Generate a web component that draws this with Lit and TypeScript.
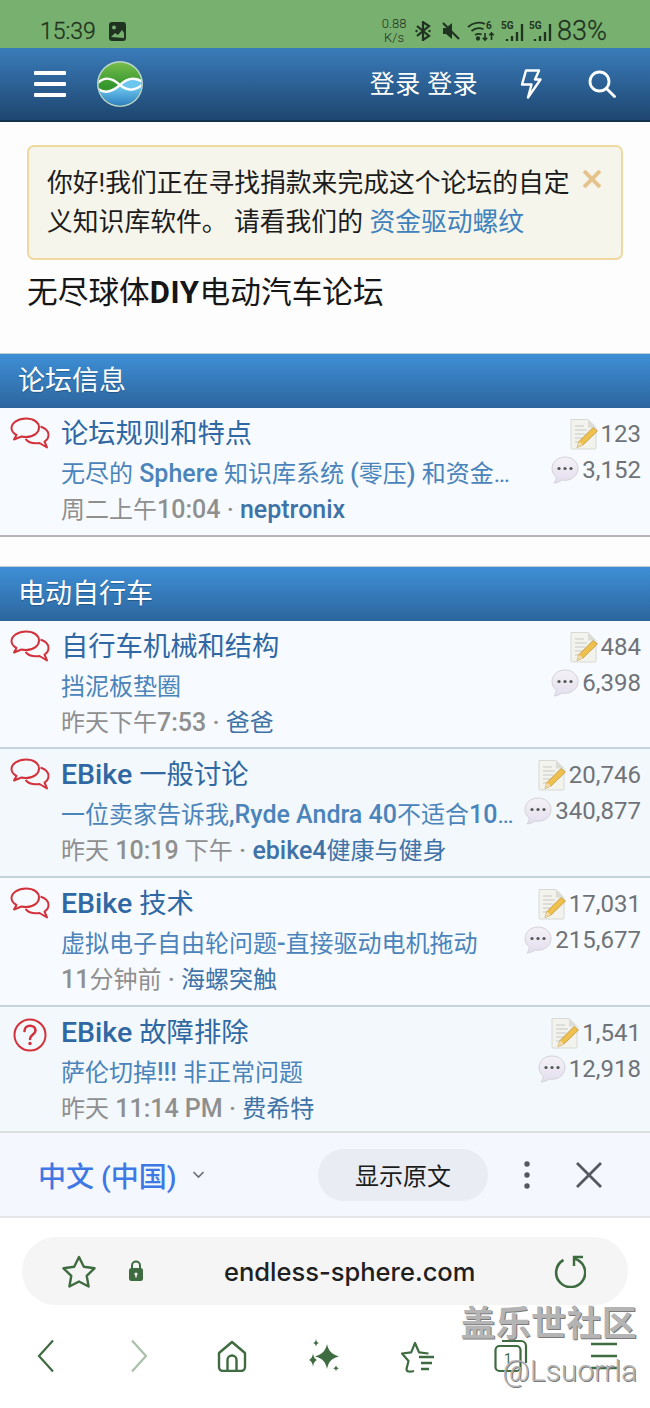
import { LitElement, html, css, svg } from "lit";
import { customElement } from "lit/decorators.js";

const mix = (t: string) =>
  t.split(/([\u0000-\u024f]+)/).filter(Boolean).map((p) =>
    /^[\u0000-\u024f]+$/.test(p) && /[^\s]/.test(p) ? html`<span class="l">${p}</span>` : p
  );

const chat = html`<svg class="ic" width="40" height="32" viewBox="0 0 40 32" fill="none" stroke="#d2323c" stroke-width="2" stroke-linejoin="round">
  <path d="M16 1.500C8 1.500 1.500 5.800 1.500 11c0 3 2 5.400 5 7l-2.500 4.500 7.500-3c1.500.3 3 .5 4.500.5 8 0 13-4.500 13-9.500S24 1.500 16 1.500Z"/>
  <path d="M30.500 9.500c4.500 1.500 8 4.500 8 8.500 0 2.500-1.500 5-4 6.500l2.500 6-7.500-4.500c-1 .2-2.500.3-3.500.3-4.500 0-8.500-1.800-10.500-4.500"/>
</svg>`;
const question = html`<svg class="ic q" width="34" height="34" viewBox="0 0 34 34" fill="none" stroke="#d2323c" stroke-width="2">
  <circle cx="17" cy="17" r="15.500"/>
  <path d="M11.500 13c0-3.300 2.500-5.200 5.500-5.200s5.500 1.900 5.500 4.700c0 4-5.500 4-5.500 8.500" stroke-width="2.600" stroke-linecap="round"/>
  <circle cx="17" cy="25.500" r="1.700" fill="#d2323c" stroke="none"/>
</svg>`;
const note = html`<svg width="28" height="32" viewBox="0 0 28 32">
  <path d="M1 1.500h17l8 8V30a1 1 0 0 1-1 1H2a1 1 0 0 1-1-1Z" fill="#f3f3ee" stroke="#d8d8d4"/>
  <path d="M18 1.500v8h8Z" fill="#dcdcd6"/>
  <path d="M5 8h9M5 12h12M5 16h10M5 20h8M5 24h6" stroke="#c8c8c4" stroke-width="1"/>
  <path d="M23 9.500l4.500 3.500L13 27l-6 2.500 2-6Z" fill="#eec04e" stroke="#b98a2c" stroke-width=".7"/>
  <path d="M7 29.500l2-6 4 3.500Z" fill="#f1dcae"/>
</svg>`;
const bubble = html`<svg width="28" height="29" viewBox="0 0 28 29">
  <defs><linearGradient id="bb" x1="0" y1="0" x2="0" y2="1"><stop offset="0" stop-color="#f4f2f6"/><stop offset="1" stop-color="#e4deee"/></linearGradient></defs>
  <path d="M14 1C6.800 1 1 6 1 12.500c0 3.500 1.600 6.500 4.300 8.600-.2 2.200-1 4.300-2.300 5.900 3.300-.3 6-1.400 8-3 1 .2 2 .3 3 .3 7.200 0 13-5.200 13-11.800S21.200 1 14 1Z" fill="url(#bb)" stroke="#d4d2da"/>
  <circle cx="8" cy="12.500" r="1.600" fill="#555"/><circle cx="14" cy="12.500" r="1.600" fill="#555"/><circle cx="20" cy="12.500" r="1.600" fill="#555"/>
</svg>`;

type Row = { icon: any; title: string; sub: string; meta: string; who: string; a: string; b: string; h: number };
const s1: Row[] = [
  { icon: chat, title: "论坛规则和特点", sub: "无尽的 Sphere 知识库系统 (零压) 和资金驱动螺纹", meta: "周二上午10:04 · ", who: "neptronix", a: "123", b: "3,152", h: 129 },
];
const s2: Row[] = [
  { icon: chat, title: "自行车机械和结构", sub: "挡泥板垫圈", meta: "昨天下午7:53 · ", who: "爸爸", a: "484", b: "6,398", h: 128 },
  { icon: chat, title: "EBike 一般讨论", sub: "一位卖家告诉我,Ryde Andra 40不适合1000W电机", meta: "昨天 10:19 下午 · ", who: "ebike4健康与健身", a: "20,746", b: "340,877", h: 129 },
  { icon: chat, title: "EBike 技术", sub: "虚拟电子自由轮问题-直接驱动电机拖动", meta: "11分钟前 · ", who: "海螺突触", a: "17,031", b: "215,677", h: 129 },
  { icon: question, title: "EBike 故障排除", sub: "萨伦切掉!!! 非正常问题", meta: "昨天 11:14 PM · ", who: "费希特", a: "1,541", b: "12,918", h: 126 },
];

@customElement("app-root")
export class AppRoot extends LitElement {
  static styles = css`
    :host { display: block; width: 650px; height: 1408px; overflow: hidden; position: relative; background: #fff;
      font-family: Roboto, "Noto Sans CJK SC", sans-serif; }
    * { box-sizing: border-box; }
    .status { height: 48px; background: #77b06f; display: flex; align-items: center; padding: 14px 0 0 40px; color: #1f3320; }
    .time { font-size: 23px; font-weight: 300; -webkit-text-stroke: .3px #1f3320; }
    .status .pic { margin-left: 12px; }
    .sright { margin-left: auto; display: flex; align-items: center; padding-right: 43px; }
    .speed { font-size: 13px; line-height: 14px; text-align: center; width: 26px; margin-right: 8px; font-weight: 300; }
    .gb { margin-left: 10px; }
    .gw { margin-left: 6px; }
    .g5 { margin-left: 4px; }
    .batt { font-size: 27px; margin-left: 4px; font-weight: 300; -webkit-text-stroke: .3px #1f3320; }
    .nav { height: 74px; background: linear-gradient(#3a7cba, #1e4670); border-bottom: 2px solid #15324f; display: flex; align-items: center; color: #fff; padding: 0 0 0 34px; }
    .burger { width: 32px; height: 26px; display: flex; flex-direction: column; justify-content: space-between; }
    .burger i { height: 4px; background: #fff; display: block; border-radius: 1px; }
    .logo { margin-left: 31px; }
    .login { margin-left: auto; font-size: 25px; letter-spacing: .4px; margin-bottom: 4px; }
    .bolt { margin-left: 42px; }
    .search { margin: 0 34px 0 46px; }
    .content { background: #fdfdfe; height: 231px; padding: 23px 27px 0; }
    .alert { height: 115px; border: 2px solid #f0d9a0; border-radius: 7px; background: #f6f5ec; padding: 17px 50px 0 18px; position: relative; font-size: 25.800px; line-height: 39px; color: #1c1c1c; }
    .alert a { color: #3f82bd; text-decoration: none; }
    .alert .x { position: absolute; right: 20px; top: 23px; }
    .h1 { font-size: 30.700px; line-height: 40px; margin-top: 13px; color: #161616; }
    .h1 b { font-weight: 700; font-family: Roboto, sans-serif; font-size: 31px; letter-spacing: .6px; }
    .sect { height: 55px; background: linear-gradient(#3e8fd6, #2c659e); border-top: 1px solid #c3ccd4; color: #fff; font-size: 27px; line-height: 54px; padding-left: 18px; text-shadow: 0 1px 1px rgba(0,0,0,.25); }
    .row { display: flex; background: #f7fbff; border-bottom: 2px solid #c2d3dc; padding: 0 9px 0 10px; }
    .row.alt { background: #f3f8fc; }
    .row.last-a { border-bottom-color: #b5b5b5; }
    .row.last-b { border-bottom-color: #dcdee2; }
    .iconc { width: 51px; flex: none; padding-top: 9px; }
    .ic.q { margin-left: 3px; margin-top: 2px; }
    .main { width: 459px; flex: none; min-width: 0; }
    .title { font-size: 27.300px; line-height: 36px; margin-top: 8px; color: #2f68a3; white-space: nowrap; }
    .title .l { font-weight: 500; font-size: 28.500px; }
    .sub { font-size: 24px; line-height: 36px; margin-top: 4px; color: #4b84ba; white-space: nowrap; overflow: hidden; text-overflow: ellipsis; }
    .sub .l { font-weight: 500; font-size: 25px; }
    .meta { font-size: 24px; line-height: 36px; color: #8f8f8f; white-space: nowrap; }
    .meta .l { font-weight: 500; font-size: 25px; }
    .meta a { color: #3f73a8; }
    .stats { flex: 1; min-width: 0; margin-left: -80px; display: flex; flex-direction: column; align-items: flex-end; padding-top: 10px; font-size: 24px; color: #6f7378; }
    .stat { display: flex; align-items: center; height: 32px; gap: 3px; white-space: nowrap; margin-bottom: 4px; }
    .gap { height: 29px; background: #fdfdfe; }
    .tr { height: 85px; background: #f4f7fe; border-bottom: 2px solid #e4e5e8; display: flex; align-items: center; padding-left: 38px; }
    .lang { font-size: 28px; font-weight: 500; color: #3f78e4; }
    .chev { margin-left: 16px; }
    .pill { margin-left: auto; width: 170px; height: 52px; border-radius: 26px; background: #e9ecf3; display: flex; align-items: center; justify-content: center; font-size: 24px; color: #1c1c1c; }
    .dots { margin-left: 36px; }
    .close { margin: 0 47px 0 45px; }
    .bottom { height: 190px; background: #fff; padding-top: 19px; }
    .url { height: 68px; margin: 0 22px; border-radius: 34px; background: #f5f5f5; display: flex; align-items: center; padding: 0 42px 0 40px; }
    .lock { margin-left: 32px; }
    .addr { font-family: Inter, Roboto, sans-serif; font-size: 25.500px; font-weight: 500; color: #202020; margin-left: 80px; }
    .reload { margin-left: auto; }
    .tools { display: grid; grid-template-columns: repeat(7, 1fr); justify-items: center; align-items: center; margin-top: 33px; height: 36px; }
    .wm { position: absolute; right: 13px; top: 1304px; text-align: right; color: #b4b4b4; text-shadow: 1px 1px 0 #7a7a7a; pointer-events: none; }
    .wm .a { font-size: 35px; line-height: 42px; font-weight: 700; letter-spacing: .3px; }
    .wm .b { font-size: 30px; line-height: 40px; font-weight: 300; margin-top: 5px; }
  `;

  row(r: Row, cls: string) {
    return html`<div class="row ${cls}" style="height:${r.h}px">
      <div class="iconc">${r.icon}</div>
      <div class="main">
        <div class="title">${mix(r.title)}</div>
        <div class="sub">${mix(r.sub)}</div>
        <div class="meta">${mix(r.meta)}<a>${mix(r.who)}</a></div>
      </div>
      <div class="stats">
        <div class="stat">${note}<span>${r.a}</span></div>
        <div class="stat">${bubble}<span>${r.b}</span></div>
      </div>
    </div>`;
  }

  render() {
    const g = "#3f6b40";
    const k = "#1f3320";
    return html`
      <div class="status">
        <span class="time">15:39</span>
        <svg class="pic" width="19" height="21" viewBox="0 0 19 21"><rect x="1" y="1" width="17" height="19" rx="3" fill="${k}"/><circle cx="6" cy="6.500" r="2" fill="#77b06f"/><path d="M3 16l4-4 3 2 4-5 2 3v5Z" fill="#77b06f"/></svg>
        <div class="sright">
          <div class="speed">0.88<br />K/s</div>
          <svg width="16" height="20" viewBox="0 0 16 20" fill="none" stroke="${k}" stroke-width="2.200"><path d="M2 5l12 10-6 4V1l6 4L2 15"/><circle cx="1.500" cy="10" r="1.200" fill="${k}" stroke="none"/><circle cx="14.500" cy="10" r="1.200" fill="${k}" stroke="none"/></svg>
          <svg class="gb" width="20" height="20" viewBox="0 0 20 20"><path d="M2 7h3l6-5v16l-6-5H2Z" fill="${k}"/><path d="M2 2l16 16" stroke="${k}" stroke-width="2.200"/></svg>
          <svg class="gw" width="28" height="22" viewBox="0 0 28 22" fill="none" stroke="${k}" stroke-width="1.700"><path d="M1 7c5-4.500 12-5.500 17-3M4.500 11c3.500-3 8-3.500 12-1.800M8 15c2-1.300 4.500-1.500 6.500-.6"/><circle cx="11" cy="18.500" r="1.300" fill="${k}"/><path d="M18 13v7M15.800 17.800l2.200 2.200 2.200-2.200M24.500 20v-7M22.300 15.200l2.200-2.200 2.200 2.200" stroke-width="1.600"/><text x="19" y="9" font-size="10" font-weight="700" fill="${k}" stroke="none" font-family="Roboto">6</text></svg>
          ${[0, 1].map((i) => svg`<svg class=${i ? "g5" : "gw"} width="24" height="22" viewBox="0 0 24 22"><text x="0" y="9" font-size="10" font-weight="700" fill="${k}" font-family="Roboto">5G</text><path d="M6 21v-2M11 21v-5M16 21v-9M21 21V4" stroke="${k}" stroke-width="2.300"/></svg>`)}
          <span class="batt">83%</span>
        </div>
      </div>
      <div class="nav">
        <div class="burger"><i></i><i></i><i></i></div>
        <svg class="logo" width="46" height="46" viewBox="0 0 46 46">
          <defs>
            <linearGradient id="lg" x1="0" y1="0" x2="0" y2="1"><stop offset="0" stop-color="#7cbf4e"/><stop offset=".55" stop-color="#33952c"/></linearGradient>
            <linearGradient id="lb" x1="0" y1="0" x2="0" y2="1"><stop offset=".3" stop-color="#6cc6ee"/><stop offset="1" stop-color="#2a79bc"/></linearGradient>
            <clipPath id="ov"><circle cx="23" cy="23" r="21.500"/></clipPath>
          </defs>
          <circle cx="23" cy="23" r="23" fill="#bcd6cf"/>
          <g clip-path="url(#ov)">
            <rect width="46" height="46" fill="url(#lg)"/>
            <path d="M0 28C8 33 15 31 23 24C30 17 38 16 46 21V46H0Z" fill="url(#lb)"/>
            <path d="M1 22C8 15 15 17 23 24C30 30 38 30 45 24M1 28C8 33 15 31 23 24C30 17 38 16 46 21" fill="none" stroke="#fff" stroke-width="2.400"/>
          </g>
        </svg>
        <span class="login">登录 登录</span>
        <svg class="bolt" width="22" height="30" viewBox="0 0 22 30" fill="none" stroke="#fff" stroke-width="2.400" stroke-linejoin="round"><path d="M6 1.500h13l-4 9h5.500L8 28.500l3.500-13H2Z"/></svg>
        <svg class="search" width="28" height="28" viewBox="0 0 28 28" fill="none" stroke="#fff" stroke-width="2.800" stroke-linecap="round"><circle cx="11.500" cy="11.500" r="9.500"/><path d="M18.500 18.500l8 8"/></svg>
      </div>
      <div class="content">
        <div class="alert">你好!我们正在寻找捐款来完成这个论坛的自定义知识库软件。 请看我们的 <a>资金驱动螺纹</a>
          <svg class="x" width="18" height="18" viewBox="0 0 18 18" stroke="#e5c38d" stroke-width="4"><path d="M1 1l16 16M17 1L1 17"/></svg>
        </div>
        <div class="h1">无尽球体<b>DIY</b>电动汽车论坛</div>
      </div>
      <div class="sect">论坛信息</div>
      ${s1.map((r) => this.row(r, "last-a"))}
      <div class="gap"></div>
      <div class="sect">电动自行车</div>
      ${s2.map((r, i) => this.row(r, (i % 2 ? "alt " : "") + (i === 3 ? "last-b" : "")))}
      <div class="tr">
        <span class="lang">中文 (中国)</span>
        <svg class="chev" width="13" height="8" viewBox="0 0 13 8" fill="none" stroke="#6a6d74" stroke-width="1.600"><path d="M1.500 1l5 5 5-5"/></svg>
        <div class="pill">显示原文</div>
        <svg class="dots" width="6" height="28" viewBox="0 0 6 28" fill="#55585f"><circle cx="3" cy="3" r="2.700"/><circle cx="3" cy="14" r="2.700"/><circle cx="3" cy="25" r="2.700"/></svg>
        <svg class="close" width="28" height="28" viewBox="0 0 28 28" stroke="#55585f" stroke-width="2.800"><path d="M2 2l24 24M26 2L2 26"/></svg>
      </div>
      <div class="bottom">
        <div class="url">
          <svg width="34" height="33" viewBox="0 0 34 33" fill="none" stroke="${g}" stroke-width="2.400" stroke-linejoin="round"><path d="M17 2l4.800 9.700 10.700 1.600-7.800 7.500 1.900 10.700-9.600-5-9.600 5 1.900-10.700-7.800-7.500 10.700-1.600Z"/></svg>
          <svg class="lock" width="16" height="24" viewBox="0 0 16 24"><path d="M4 10V6.500a4 4 0 0 1 8 0V10" fill="none" stroke="${g}" stroke-width="2"/><rect x="1" y="9" width="14" height="13" rx="2.500" fill="${g}"/><circle cx="8" cy="15" r="1.600" fill="#f5f5f5"/><path d="M8 15v3.500" stroke="#f5f5f5" stroke-width="1.400"/></svg>
          <span class="addr">endless-sphere.com</span>
          <svg class="reload" width="32" height="34" viewBox="0 0 32 34" fill="none" stroke="${g}" stroke-width="2.600"><path d="M9.500 6A14.500 14.500 0 1 0 20 4.500"/><path d="M29 3H20V12" stroke-width="2.400"/></svg>
        </div>
        <div class="tools">
          <svg width="18" height="34" viewBox="0 0 18 34" fill="none" stroke="${g}" stroke-width="2.200"><path d="M16 1.500L2 17l14 15.500"/></svg>
          <svg width="18" height="34" viewBox="0 0 18 34" fill="none" stroke="#a9c0a9" stroke-width="2.200"><path d="M2 1.500L16 17 2 32.500"/></svg>
          <svg width="30" height="32" viewBox="0 0 30 32" fill="none" stroke="${g}" stroke-width="2.400" stroke-linejoin="round"><path d="M2 13L15 2l13 11v14a4 4 0 0 1-4 4H6a4 4 0 0 1-4-4Z"/><path d="M10.500 31V20a4.500 4.500 0 0 1 9 0v11"/></svg>
          <svg width="32" height="34" viewBox="0 0 32 34" fill="${g}"><path d="M18 5c1.500 7 4.500 10 12 12.500-7.500 2-10.500 5-12 12.500-1.500-7.500-4.500-10.500-12-12.500 7.500-2.500 10.500-5.500 12-12.500Z"/><path d="M7 0c.4 2.500 1 3.200 3 4-2 .6-2.600 1.300-3 4-.4-2.700-1-3.400-3-4 2-.8 2.600-1.500 3-4ZM27 26c.3 2 1 2.700 3 3.200-2 .5-2.700 1.200-3 3.500-.3-2.300-1-3-3-3.500 2-.5 2.700-1.200 3-3.200ZM4 14c.5 4 1.500 5.500 4 7-2.500 1-3.500 3-4 7-.5-4-1.500-6-4-7 2.500-1.500 3.500-3 4-7Z"/></svg>
          <svg width="34" height="33" viewBox="0 0 34 33" fill="none" stroke="${g}" stroke-width="2.200" stroke-linejoin="round"><path d="M13 31c-4 1-7.500 1-7.500-2l2-8L1 13.500l9.200-1.200L14 3l4 9.300 9.500 1.200"/><path d="M18 17h15M20 23h11M20 29h8" stroke-width="2.400"/></svg>
          <svg width="34" height="34" viewBox="0 0 34 34" fill="none" stroke="${g}" stroke-width="2.200"><rect x="1.500" y="7" width="25" height="25" rx="4"/><path d="M8 2h19a5 5 0 0 1 5 5v17"/><text x="10" y="25" font-size="14" fill="${g}" stroke="none" font-family="Roboto">1</text></svg>
          <svg width="28" height="30" viewBox="0 0 28 30" stroke="${g}" stroke-width="2.400"><path d="M1 3h26M1 15h26M1 27h26"/></svg>
        </div>
      </div>
      <div class="wm"><div class="a">盖乐世社区</div><div class="b">@Lsuorrla</div></div>
    `;
  }
}
